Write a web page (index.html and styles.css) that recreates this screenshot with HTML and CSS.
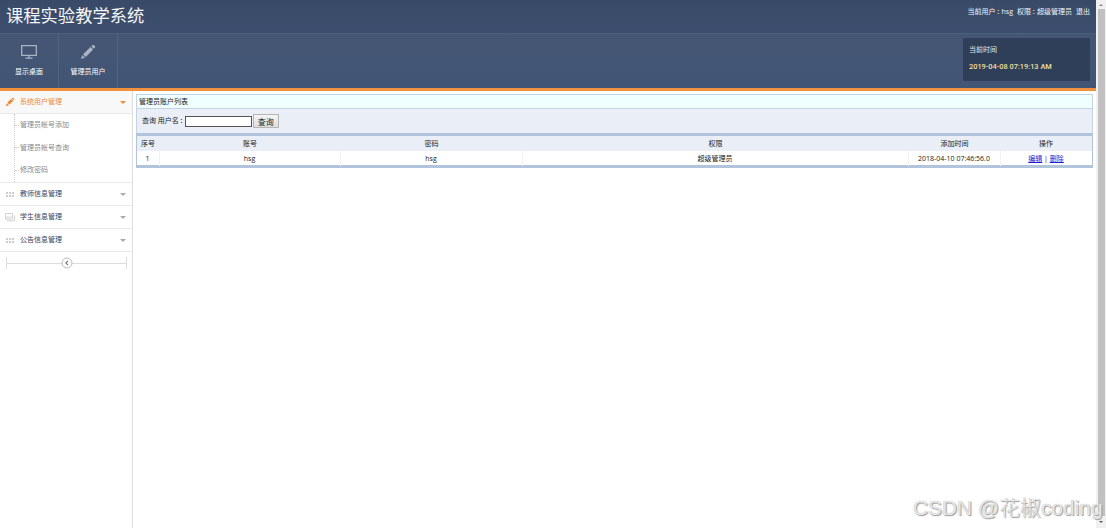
FILE: index.html
```html
<!DOCTYPE html>
<html>
<head>
<meta charset="utf-8">
<title>课程实验教学系统</title>
<link rel="stylesheet" href="styles.css">
</head>
<body>
<div class="app">
  <div class="page">
    <header class="topbar">
      <h1 class="brand">课程实验教学系统</h1>
      <div class="account"><span>当前用户<b class="colon">：</b>hsg</span><span>权限<b class="colon">：</b>超级管理员</span><span>退出</span></div>
    </header>
    <nav class="toolbar">
      <div class="tool">
        <svg class="tool-icon" viewBox="0 0 18 16"><path d="M1.7 1.7h14.6v9.6H1.7zM9 11.5v2.3M5.5 14.2h7" fill="none" stroke="currentColor" stroke-width="1.3"/></svg>
        <span>显示桌面</span>
      </div>
      <div class="tool">
        <svg class="tool-icon" viewBox="0 0 18 16"><path d="M2 15l1.3-4.1 2.8 2.8zM4 10.2l7.5-7.3 2.7 2.7-7.4 7.4zM12.3 2.2l1.2-1.1c1.3-.7 3.2.9 2.6 2.4L15 4.8z" fill="currentColor"/></svg>
        <span>管理员用户</span>
      </div>
      <div class="clock"><span>当前时间</span><span class="clock-time">2019-04-08 07:19:13 AM</span></div>
    </nav>
    <div class="body">
      <aside class="sidebar">
        <div class="menu active">
          <svg class="menu-icon" viewBox="0 0 10 10"><path d="M.8 9.2l1-3L3.9 8.200zM2.400 5.600L6.300 1.800l2 2-3.900 3.900zM6.800 1.300l.7-.6c.8-.3 2 .9 1.700 1.700l-.5.800z" fill="currentColor"/></svg>
          <span>系统用户管理</span><i class="caret"></i>
        </div>
        <ul class="submenu"><li>管理员帐号添加</li><li>管理员帐号查询</li><li>修改密码</li></ul>
        <div class="menu">
          <svg class="menu-icon" viewBox="0 0 10 10"><path d="M1 3h2v2h-2zM4 3h2v2h-2zM7 3h2v2h-2zM1 6h2v2h-2zM4 6h2v2h-2zM7 6h2v2h-2z" fill="currentColor"/></svg>
          <span>教师信息管理</span><i class="caret"></i>
        </div>
        <div class="menu">
          <svg class="menu-icon" viewBox="0 0 10 10"><path d="M.5 1.500h7v5.500h-7zM2 8.800h7.500V3.500M1 6l2-1.500 1.500 1L6 4.500 7.500 6" fill="none" stroke="currentColor" stroke-width=".9"/></svg>
          <span>学生信息管理</span><i class="caret"></i>
        </div>
        <div class="menu">
          <svg class="menu-icon" viewBox="0 0 10 10"><path d="M1 3h2v2h-2zM4 3h2v2h-2zM7 3h2v2h-2zM1 6h2v2h-2zM4 6h2v2h-2zM7 6h2v2h-2z" fill="currentColor"/></svg>
          <span>公告信息管理</span><i class="caret"></i>
        </div>
        <div class="collapse">
          <svg class="collapse-icon" viewBox="0 0 12 12"><circle cx="6" cy="6" r="5" fill="#fff" stroke="#bbb"/><path d="M7 3.800L4.800 6 7 8.200" fill="none" stroke="#777" stroke-width="1.100"/></svg>
        </div>
      </aside>
      <main class="content">
        <div class="panel-title">管理员账户列表</div>
        <form class="search">
          <label for="name">查询 用户名<b class="colon">：</b></label><input id="name" class="search-input" type="text"><button class="search-button" type="button">查询</button>
        </form>
        <div class="grid">
          <div class="row head"><span>序号</span><span>账号</span><span>密码</span><span>权限</span><span>添加时间</span><span>操作</span></div>
          <div class="row"><span>1</span><span>hsg</span><span>hsg</span><span>超级管理员</span><span>2018-04-10 07:46:56.0</span><span><a href="#">编辑</a> | <a href="#">删除</a></span></div>
        </div>
      </main>
    </div>
  </div>
  <div class="scrollbar"><i class="scroll-arrow up"></i><div class="thumb"></div><i class="scroll-arrow down"></i></div>
  <div class="watermark">CSDN @花椒coding</div>
</div>
</body>
</html>
```
FILE: styles.css
```css
* { box-sizing: border-box; }
body { margin: 0; font: 7px/10px "Open Sans", "Noto Sans CJK SC", sans-serif; color: #222; background: #fff; }
.app { position: relative; display: flex; width: 1106px; height: 528px; overflow: hidden; }
.page { width: 1096px; display: flex; flex-direction: column; }
.topbar { height: 33px; display: flex; justify-content: space-between; background: linear-gradient(#384a67, #3d4f6e); color: #f5f6f8; }
.brand { margin: 4px 0 0 6px; font-size: 17.3px; line-height: 24px; font-weight: 400; white-space: nowrap; }
.account { display: flex; gap: 4px; margin: 7px 6px 0 0; white-space: nowrap; }
.colon { display: inline-block; width: 6px; font-weight: 400; text-indent: 1px; }
.toolbar { height: 58px; display: flex; background: linear-gradient(#445673, #425575); border-top: 1px solid #4d5e7b; border-bottom: 3px solid #f1913d; color: #fff; }
.tool { width: 59px; display: flex; flex-direction: column; align-items: center; padding-top: 10px; border-right: 1px solid #53647f; }
.tool-icon { width: 18px; height: 16px; margin-bottom: 7px; color: #aab3c2; }
.clock { width: 127px; height: 43px; margin: 4px 6px 0 auto; padding: 7px 6px 5px; display: flex; flex-direction: column; gap: 7px; background: #303f59; color: #e4e7ec; border-radius: 1px; }
.clock-time { color: #f2df9f; font-family: Roboto, sans-serif; font-size: 7.4px; font-weight: 500; }
.body { flex: 1; display: flex; }
.sidebar { width: 133px; border-right: 1px solid #ddd; }
.menu { height: 23px; display: flex; align-items: center; padding: 0 6px 0 5px; border-bottom: 1px solid #eaeaea; color: #35445c; }
.menu.active { color: #ef8b35; background: #f8f8f8; }
.menu-icon { width: 10px; height: 10px; margin-right: 5px; color: #cdcdcd; }
.active .menu-icon { color: #ef8b35; }
.caret { margin-left: auto; border: 3px solid transparent; border-top-color: #aaa; border-bottom: 0; }
.active .caret { border-top-color: #ef8b35; }
.submenu { list-style: none; margin: 0 0 0 14px; padding: 0; height: 68px; border-left: 1px dotted #ccc; color: #888; }
.submenu li { height: 22.600px; display: flex; align-items: center; }
.submenu li::before { content: ""; width: 4px; margin-right: 1px; border-top: 1px dotted #ccc; }
.sidebar .submenu + .menu { border-top: 1px solid #eaeaea; height: 24px; }
.collapse { height: 12px; margin: 5px 5px 0 6px; display: flex; align-items: center; justify-content: center; border: solid #ddd; border-width: 0 1px; background: linear-gradient(#ddd, #ddd) center / 100% 1px no-repeat; }
.collapse-icon { width: 12px; height: 12px; }
.content { flex: 1; padding: 3px 3px 0; }
.panel-title { height: 15px; padding: 2px; line-height: 10px; background: #efffff; border: 1px solid #c5d3e2; }
.search { height: 24px; display: flex; align-items: center; padding-left: 5px; background: #e9eef7; border: solid #c5d3e2; border-width: 0 1px; }
.search-input { width: 67px; height: 11px; margin: 0 1px 0 0; padding: 0; border: 1px solid #555; font: inherit; background: #fff; }
.search-button { width: 26px; height: 14px; padding: 0; font: 8px/11px "Open Sans", "Noto Sans CJK SC", sans-serif; color: #222; background: linear-gradient(#f5f5f5, #ddd); border: 1px solid #b5b5b5; }
.grid { border: solid #b1c4dc; border-width: 3px 1px; }
.row { display: grid; grid-template-columns: 23px 181px 182px 386px 92px 1fr; height: 14px; }
.row span { text-align: center; line-height: 15px; padding-right: 1px; border-right: 1px solid #f2f2f2; white-space: nowrap; }
.row span:last-child { border-right: 0; }
.row.head { height: 15px; background: #e9eef7; }
.row.head span { border: 0; }
.row a { color: #1b1bd0; }
.scrollbar { width: 10px; display: flex; flex-direction: column; align-items: center; background: #f1f1f1; }
.thumb { width: 7px; height: 507px; margin-top: 3px; background: #c1c1c1; }
.scroll-arrow { border: 2px solid transparent; }
.scroll-arrow.up { border-bottom-color: #888; border-top: 0; margin-top: 4px; height: 2px; }
.scroll-arrow.down { border-top-color: #555; border-bottom: 0; margin-top: 5px; }
.watermark { position: absolute; left: 913px; top: 494px; font: 20.900px/28px "Liberation Sans", "Noto Sans CJK SC", sans-serif; font-weight: 300; color: #e6e6e6; white-space: nowrap; text-shadow: 1px 1px 1px #999, 0 0 1px #bbb; }
```
